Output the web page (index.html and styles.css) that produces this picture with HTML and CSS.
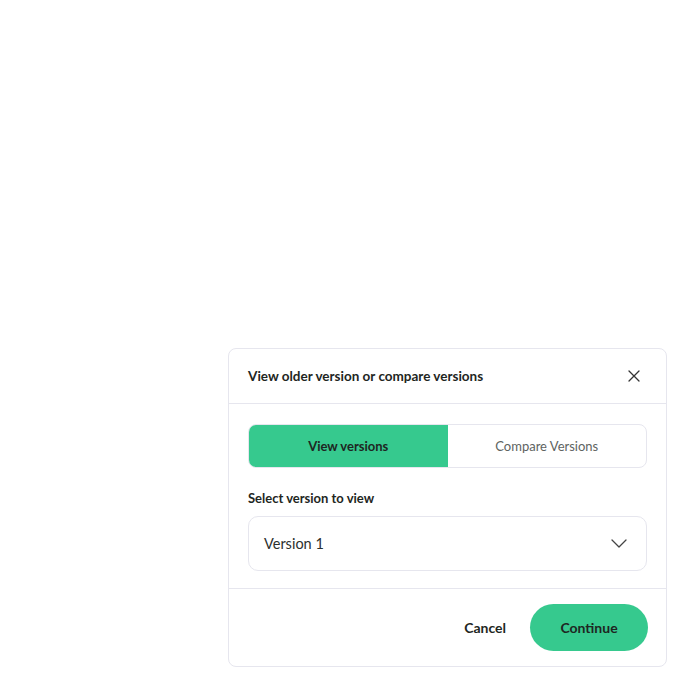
FILE: index.html
```html
<!DOCTYPE html>
<html>
<head>
<meta charset="utf-8">
<link rel="stylesheet" href="styles.css">
</head>
<body>
<div class="page">
  <div class="modal">
    <div class="modal-header">
      <span class="title">View older version or compare versions</span>
      <svg class="close" width="12" height="12" viewBox="0 0 12 12"><path d="M1 1 L11 11 M11 1 L1 11" stroke="#333" stroke-width="1.3" fill="none" stroke-linecap="round"/></svg>
    </div>
    <div class="modal-body">
      <div class="tabs">
        <div class="tab active">View versions</div>
        <div class="tab">Compare Versions</div>
      </div>
      <div class="label">Select version to view</div>
      <div class="select">
        <span>Version 1</span>
        <svg width="16" height="9" viewBox="0 0 16 9"><path d="M1 1 L8 8 L15 1" stroke="#444" stroke-width="1.3" fill="none" stroke-linecap="round" stroke-linejoin="round"/></svg>
      </div>
    </div>
    <div class="modal-footer">
      <button class="btn-cancel">Cancel</button>
      <button class="btn-continue">Continue</button>
    </div>
  </div>
</div>
</body>
</html>
```
FILE: styles.css
```css
* { box-sizing: border-box; }
html, body { margin: 0; padding: 0; background: #fff; }
body { font-family: "Lato", "Noto Sans", sans-serif; color: #1e2622; }
.page { width: 700px; height: 700px; padding: 348px 33px 0 228px; }
.modal {
  width: 439px;
  height: 319px;
  border: 1px solid #e6e6ee;
  border-radius: 8px;
  background: #fff;
  display: flex;
  flex-direction: column;
}
.modal-header {
  height: 55px;
  border-bottom: 1px solid #e6e6ee;
  display: flex;
  align-items: center;
  justify-content: space-between;
  padding: 0 26px 0 19px;
}
.title { font-size: 13.5px; font-weight: 700; color: #1e2622; }
.close { display: block; }
.modal-body { padding: 20px 19px 17px 19px; border-bottom: 1px solid #e6e6ee; }
.tabs {
  display: flex;
  height: 44px;
  border: 1px solid #e6e6ee;
  border-radius: 8px;
  overflow: hidden;
}
.tab {
  flex: 1;
  display: flex;
  align-items: center;
  justify-content: center;
  font-size: 13px;
  color: #5e6361;
}
.tab.active { background: #36c98e; color: #1e2622; font-weight: 700; }
.label { font-size: 13px; font-weight: 700; line-height: 16px; margin: 22px 0 10px; color: #1e2622; }
.select {
  height: 55px;
  border: 1px solid #e6e6ee;
  border-radius: 10px;
  display: flex;
  align-items: center;
  justify-content: space-between;
  padding: 0 19px 0 15px;
  font-size: 14.5px;
  color: #2b302e;
}
.modal-footer {
  flex: 1;
  display: flex;
  align-items: center;
  justify-content: flex-end;
  gap: 24px;
  padding: 0 18px 0 0;
}
.btn-cancel {
  background: none; border: none; font-family: inherit;
  font-size: 14px; font-weight: 700; color: #1e2622; padding: 0;
}
.btn-continue {
  width: 118px; height: 47px; border-radius: 24px; border: none;
  background: #36c98e; font-family: inherit; font-size: 14px; font-weight: 700; color: #1e2622;
}
```
